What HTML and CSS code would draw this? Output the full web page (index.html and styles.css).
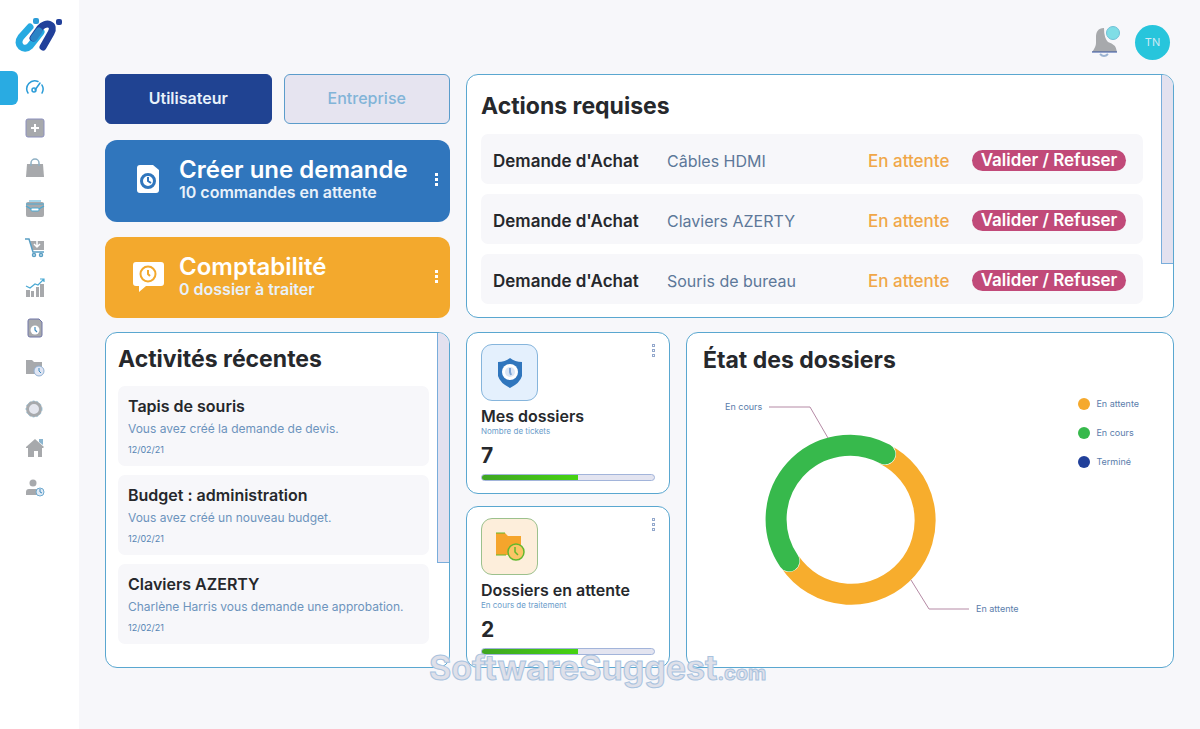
FILE: index.html
```
<!DOCTYPE html>
<html lang="fr">
<head>
<meta charset="utf-8">
<title>Tableau de bord</title>
<meta name="viewport" content="width=device-width, initial-scale=1">
<link rel="stylesheet" href="styles.css">
</head>
<body>
<div class="app">
  <nav class="sidebar" aria-label="Navigation principale">
    <a class="logo" href="#" aria-label="Accueil">
      <svg viewBox="0 0 48 36" width="48" height="36" fill="none" stroke-linecap="round" stroke-linejoin="round">
        <path d="M15 10 6 20c-6 8 3 15 9 9l11-14" stroke="#27aae1" stroke-width="7"/>
        <path d="m18 21 7-10c6-7 16-4 11 5L28 30" stroke="#21409a" stroke-width="7"/>
        <path d="m19 21 5-7" stroke="#2b84c6" stroke-width="7"/>
        <rect x="18" y="1" width="6" height="6" rx="2" fill="#2b9cd8"/><rect x="41" y="2" width="6" height="6" rx="2" fill="#21409a"/>
      </svg>
    </a>
    <ul class="nav">
      <li><a class="active" href="#" aria-label="Tableau de bord"><svg viewBox="0 0 20 20" fill="none" stroke="#2b9cd8" stroke-width="1.500" stroke-linecap="round"><path d="M3 15a8 8 0 0 1 10-11.500M17 7a8 8 0 0 1 0 8"/><path d="m10 12 5-7"/><circle cx="9" cy="12" r="2"/></svg></a></li>
      <li><a href="#" aria-label="Ajouter"><svg viewBox="0 0 20 20"><rect x="1" y="1" width="18" height="18" rx="2" fill="#a7a9ac" stroke="#8c90bd"/><path d="M6 10h8M10 6v8" stroke="#fff" stroke-width="2"/></svg></a></li>
      <li><a href="#" aria-label="Achats"><svg viewBox="0 0 20 20"><path d="M2 6h16l1 13H1z" fill="#a7a9ac"/><path d="M6 8V5a4 4 0 0 1 8 0v3" fill="none" stroke="#8fb0c4" stroke-width="1.500"/></svg></a></li>
      <li><a href="#" aria-label="Affaires"><svg viewBox="0 0 20 20"><path d="M1 6q0-2 2-2h14q2 0 2 2v11q0 2-2 2H3q-2 0-2-2z" fill="#a7a9ac"/><path d="M4 3h12M1 6h18M1 8q9 7 18 0" stroke="#4ba9d3" stroke-width="1.200" fill="none"/><rect x="6" y="10" width="8" height="3" rx="1" fill="#fff" stroke="#4ba9d3"/></svg></a></li>
      <li><a href="#" aria-label="Commandes"><svg viewBox="0 0 20 20" fill="none" stroke="#5a9fc4" stroke-width="1.500"><path d="M5 3h14v9H7z" fill="#a7a9ac" stroke="none"/><path d="M0 1h4l4 13h11"/><path d="M12 1v8m-3-3 3 3 3-3" stroke="#fff"/><circle cx="9" cy="17" r="1.500"/><circle cx="16" cy="17" r="1.500"/></svg></a></li>
      <li><a href="#" aria-label="Statistiques"><svg viewBox="0 0 20 20"><path d="M1 12h4v7H1zM6 13h3v6H6zM11 9h3v10h-3zM15 6h4v13h-4z" fill="#a7a9ac"/><path d="m1 8 4 2 5-4 3 1 6-6m-4 0h4v3" fill="none" stroke="#4ba9d3" stroke-width="1.200"/></svg></a></li>
      <li><a href="#" aria-label="Documents en attente"><svg viewBox="0 0 20 20"><path d="M5 1h9l3 3v13q0 2-2 2H5q-2 0-2-2V3q0-2 2-2z" fill="#a7a9ac" stroke="#7176a8"/><circle cx="10" cy="12" r="4.500" fill="#fff"/><path d="M10 9v3l2 2" fill="none" stroke="#3e8bc0" stroke-width="1.200"/></svg></a></li>
      <li><a href="#" aria-label="Dossiers"><svg viewBox="0 0 20 20"><path d="M1 2h6l2 2h8v12H1z" fill="#a7a9ac"/><circle cx="14" cy="13" r="5" fill="#dfe5f3" stroke="#91afd1"/><path d="M14 10v3l2 2" fill="none" stroke="#3e8bc0"/></svg></a></li>
      <li><a href="#" aria-label="Budget"><svg viewBox="0 0 20 20"><circle cx="9" cy="11" r="6.500" fill="#e4e6ee" stroke="#a7a9ac" stroke-width="3"/><circle cx="9" cy="11" r="8" fill="none" stroke="#86b7d1" stroke-width=".8" stroke-dasharray="2 2"/></svg></a></li>
      <li><a href="#" aria-label="Entreprise"><svg viewBox="0 0 20 20"><path d="m10 1 9 8-1 1h-1v9h-4v-6H9v6H3v-9H1V9z" fill="#a7a9ac"/><path d="M14 4V1h4v6" fill="#8bb5cf"/></svg></a></li>
      <li><a href="#" aria-label="Utilisateurs"><svg viewBox="0 0 20 20"><circle cx="8" cy="5" r="3.500" fill="#a7a9ac"/><path d="M1 17v-3q0-3 3-3h8v6z" fill="#a7a9ac"/><circle cx="15" cy="14" r="4" fill="#dfeaf5" stroke="#6ea9cf"/><path d="M15 11v3l2 1" fill="none" stroke="#3e8bc0"/></svg></a></li>
    </ul>
  </nav>

  <main class="main">
    <header class="topbar">
      <button class="bell" type="button" aria-label="Notifications">
        <svg viewBox="0 0 30 32" width="30" height="32"><path d="M14 2c-6 0-8 4-8 9v6q0 4-4 9h25q-1-8-9-10-4-4-4-14z" fill="#a7a9ac"/><path d="M2 26h25" stroke="#30509f"/><path d="M10 28q4 4 8 0" fill="none" stroke="#9bb3d2" stroke-width="2"/><circle cx="23" cy="7" r="6.500" fill="#7fdde6" stroke="#6fbfd6"/></svg>
      </button>
      <button class="avatar" type="button">TN</button>
    </header>

    <div class="board">
      <section class="left-top">
        <div class="tabs">
          <button class="tab tab-on" type="button">Utilisateur</button>
          <button class="tab" type="button">Entreprise</button>
        </div>
        <article class="banner blue">
          <svg class="banner-icon" viewBox="0 0 34 34"><path d="M9 3h13l6 5v20q0 3-3 3H9q-3 0-3-3V6q0-3 3-3z" fill="#fff"/><circle cx="17" cy="19" r="6.500" fill="none" stroke="#3076bd" stroke-width="3"/><path d="M17 15v4l3 2" fill="none" stroke="#3076bd" stroke-width="2"/></svg>
          <div class="banner-text"><h2>Créer une demande</h2><p>10 commandes en attente</p></div>
          <button class="dots" type="button" aria-label="Options"><i></i><i></i><i></i></button>
        </article>
        <article class="banner orange">
          <svg class="banner-icon" viewBox="0 0 34 34"><path d="M5 3h25q3 0 3 3v18q0 3-3 3H15l-7 6v-6H5q-3 0-3-3V6q0-3 3-3z" fill="#fff"/><circle cx="17" cy="15" r="7.500" fill="none" stroke="#f3a92d" stroke-width="2"/><path d="M17 11v4l2 2" fill="none" stroke="#f3a92d" stroke-width="2"/></svg>
          <div class="banner-text"><h2>Comptabilité</h2><p>0 dossier à traiter</p></div>
          <button class="dots" type="button" aria-label="Options"><i></i><i></i><i></i></button>
        </article>
      </section>

      <section class="card actions">
        <div class="actions-body">
          <h1>Actions requises</h1>
          <ul class="rows">
            <li class="row"><strong>Demande d'Achat</strong><span class="item">Câbles HDMI</span><span class="state">En attente</span><button class="pill" type="button">Valider / Refuser</button></li>
            <li class="row"><strong>Demande d'Achat</strong><span class="item">Claviers AZERTY</span><span class="state">En attente</span><button class="pill" type="button">Valider / Refuser</button></li>
            <li class="row"><strong>Demande d'Achat</strong><span class="item">Souris de bureau</span><span class="state">En attente</span><button class="pill" type="button">Valider / Refuser</button></li>
          </ul>
        </div>
        <div class="scroll scroll-a"></div>
      </section>

      <section class="card recent">
        <div class="recent-body">
          <h1>Activités récentes</h1>
          <ul class="feed">
            <li><h3>Tapis de souris</h3><p>Vous avez créé la demande de devis.</p><time>12/02/21</time></li>
            <li><h3>Budget : administration</h3><p>Vous avez créé un nouveau budget.</p><time>12/02/21</time></li>
            <li><h3>Claviers AZERTY</h3><p>Charlène Harris vous demande une approbation.</p><time>12/02/21</time></li>
          </ul>
        </div>
        <div class="scroll scroll-b"></div>
      </section>

      <div class="stats">
        <article class="card stat">
          <div class="stat-top">
            <span class="tile tile-blue"><svg viewBox="0 0 30 32" width="30" height="32"><path d="M15 1q5 4 12 4v14q-2 7-12 12Q5 26 3 19V5q7 0 12-4z" fill="#3076bd"/><circle cx="15" cy="15" r="8" fill="#fff"/><circle cx="15" cy="15" r="5" fill="#dbe6f5"/><path d="M15 11v4l1 3" fill="none" stroke="#7fa5d6" stroke-width="2"/></svg></span>
            <button class="dots gray" type="button" aria-label="Options"><i></i><i></i><i></i></button>
          </div>
          <h3>Mes dossiers</h3><p>Nombre de tickets</p><b>7</b>
          <div class="bar"><span></span></div>
        </article>
        <article class="card stat">
          <div class="stat-top">
            <span class="tile tile-orange"><svg viewBox="0 0 30 32" width="30" height="32"><path d="M1 2h9l3 3h13v19H1z" fill="#f5a52c"/><path d="M1 2h9M1 24h10" stroke="#62b82d"/><circle cx="21" cy="21" r="8" fill="#fbc566" stroke="#62b82d" stroke-width="1.500"/><path d="M20 16v5l3 3" fill="none" stroke="#62b82d" stroke-width="1.500"/></svg></span>
            <button class="dots gray" type="button" aria-label="Options"><i></i><i></i><i></i></button>
          </div>
          <h3>Dossiers en attente</h3><p>En cours de traitement</p><b>2</b>
          <div class="bar"><span></span></div>
        </article>
      </div>

      <section class="card chart">
        <h1>État des dossiers</h1>
        <div class="chart-body">
          <svg class="donut" viewBox="0 0 330 230" role="img" aria-label="Répartition des dossiers">
            <g fill="none" stroke-width="21">
              <path d="M181 62A74 74 0 1 1 87 170" stroke="#f7ad2d"/>
              <path d="M86 169A74 74 0 0 1 182 62" stroke="#fff" stroke-width="22" stroke-linecap="round"/>
              <path d="M86 169A74 74 0 0 1 182 62" stroke="#37b94c" stroke-linecap="round"/>
            </g>
            <g fill="none" stroke="#b58aa5"><path d="M66 15h41l18 31"/><path d="m208 188 18 29h40"/></g>
            <text x="22" y="18">En cours</text><text x="273" y="220">En attente</text>
          </svg>
          <ul class="legend">
            <li><i class="c-orange"></i>En attente</li>
            <li><i class="c-green"></i>En cours</li>
            <li><i class="c-navy"></i>Terminé</li>
          </ul>
        </div>
      </section>
    </div>
    <div class="watermark">SoftwareSuggest<small>.com</small></div>
  </main>
</div>
</body>
</html>
```
FILE: styles.css
```
* { box-sizing: border-box; margin: 0; padding: 0; }
body { background: #f7f7fa; color: #26282c; font-family: Inter, "Open Sans", sans-serif; font-size: 16px; }
ul { list-style: none; }
button { border: 0; background: none; font: inherit; color: inherit; cursor: pointer; }
i { display: block; }
.app { display: flex; min-height: 100vh; }

.sidebar { flex: none; width: 79px; background: #fff; padding-top: 17px; }
.logo { display: block; margin-left: 15px; height: 36px; }
.nav { display: grid; grid-auto-rows: 40px; padding-top: 15px; }
.nav a { display: flex; align-items: center; height: 40px; padding-left: 25px; }
.nav svg { width: 20px; height: 20px; }
.nav .active { padding-left: 0; gap: 7px; }
.nav .active::before { content: ""; width: 18px; height: 34px; background: #29abe2; border-radius: 0 6px 6px 0; }

.main { flex: 1; min-width: 0; padding: 24px 26px 0; position: relative; }
.topbar { display: flex; justify-content: flex-end; align-items: center; gap: 15px; height: 36px; padding-right: 4px; }
.bell { height: 32px; }
.avatar { width: 35px; height: 35px; border-radius: 50%; background: #27c5dc; color: #cdeaf6; font-size: 11px; }

.board { display: grid; grid-template-columns: 345fr 204fr 488fr; grid-template-rows: 244px 336px; gap: 14px 16px; margin-top: 14px; }
.left-top { display: grid; grid-template-rows: 50px 82px 81px; align-content: space-between; }
.tabs { display: grid; grid-template-columns: 1fr 1fr; gap: 12px; }
.tab { border: 1px solid #5b9ccb; border-radius: 6px; background: #e6e4f0; color: #82b4d8; font-weight: 500; font-size: 16px; padding-bottom: 3px; }
.tab-on { background: #204392; border-color: #204392; color: #e8f2fb; font-weight: 600; }
.banner { display: grid; grid-template-columns: 34px 1fr 12px; align-items: center; gap: 14px; border-radius: 12px; padding: 0 8px 3px 26px; color: #fff; }
.blue { background: #3076bd; }
.orange { background: #f3a92d; }
.banner-icon { width: 34px; height: 34px; }
.banner h2 { font-size: 24px; line-height: 26px; font-weight: 600; white-space: nowrap; }
.banner p { font-size: 16px; line-height: 18px; font-weight: 600; color: #e8f1fa; }
.dots { display: grid; gap: 2px; justify-content: center; }
.dots i { width: 3px; height: 3px; background: #fff; }
.dots.gray i { border: 1px solid #93a8cc; }

.card { background: #fff; border: 1px solid #5aa7d0; border-radius: 12px; }
h1 { font-size: 23px; line-height: 28px; font-weight: 700; }
.actions { grid-column: 2 / 4; display: flex; justify-content: space-between; overflow: hidden; }
.actions-body { flex: 1; padding: 17px 18px 0 14px; }
.rows { display: grid; gap: 10px; margin-top: 14px; }
.row { display: grid; grid-template-columns: 160px 187px 90px 154px; column-gap: 14px; justify-content: start; align-items: center; height: 50px; padding: 3px 12px 0; border-radius: 7px; background: #f7f7fa; font-size: 17px; white-space: nowrap; }
.row strong { font-weight: 600; }
.item { font-size: 16px; color: #5d7899; }
.state { color: #f0a748; font-weight: 500; }
.pill { height: 21px; line-height: 21px; border-radius: 11px; background: #c14a79; color: #fff; font-weight: 600; }
.scroll { flex: none; width: 12px; background: #e3e1ef; border: 1px solid #79addb; border-width: 0 0 1px 1px; }
.scroll-a { height: 189px; }
.scroll-b { height: 230px; }

.recent { display: flex; overflow: hidden; }
.recent-body { flex: 1; min-width: 0; padding: 12px 8px 0 12px; }
.feed { display: grid; gap: 9px; margin-top: 13px; }
.feed li { height: 80px; padding: 10px; border-radius: 7px; background: #f7f7fa; }
.feed h3 { font-size: 16px; line-height: 20px; font-weight: 600; }
.feed p { font-size: 12px; line-height: 16px; margin-top: 5px; color: #6d94bd; white-space: nowrap; }
.feed time { display: block; font-size: 9px; line-height: 14px; margin-top: 6px; color: #5584b3; }

.stats { display: grid; grid-template-rows: 1fr 1fr; gap: 12px; }
.stat { padding: 11px 14px 0; }
.stat-top { display: flex; justify-content: space-between; align-items: flex-start; }
.tile { display: grid; place-items: center; width: 57px; height: 57px; border-radius: 11px; border: 1px solid; }
.tile-blue { background: #e4f0fd; border-color: #86b5dc; }
.tile-orange { background: #fdeedb; border-color: #9cc18d; }
.stat h3 { font-size: 16px; line-height: 18px; font-weight: 600; margin-top: 6px; white-space: nowrap; }
.stat p { font-size: 8px; line-height: 12px; color: #6a9cca; }
.stat b { display: block; font-size: 21px; line-height: 24px; margin-top: 7px; }
.bar { height: 7px; margin-top: 6px; background: #e3e4f0; border: 1px solid #a2b4da; border-radius: 4px; overflow: hidden; }
.bar span { display: block; width: 56%; height: 100%; background: linear-gradient(90deg, #3fa522, #46d312); }

.chart { padding: 13px 16px; }
.chart-body { display: flex; justify-content: space-between; align-items: flex-start; margin-top: 18px; }
.donut { width: 330px; height: 230px; }
.donut text { font-size: 9px; fill: #5a7dab; }
.legend { display: grid; gap: 15px; padding: 5px 18px 0 0; font-size: 9px; line-height: 14px; color: #5a7dab; }
.legend li { display: flex; align-items: center; gap: 6px; }
.legend i { width: 12px; height: 12px; border-radius: 50%; }
.c-orange { background: #f5a92d; }
.c-green { background: #37b94c; }
.c-navy { background: #21409a; }

.watermark { position: absolute; left: 350px; top: 650px; font-size: 34px; line-height: 36px; font-weight: 700; color: #dfe0e9; -webkit-text-stroke: 1px #a9c3df; pointer-events: none; }
.watermark small { font-size: 20px; }
```
